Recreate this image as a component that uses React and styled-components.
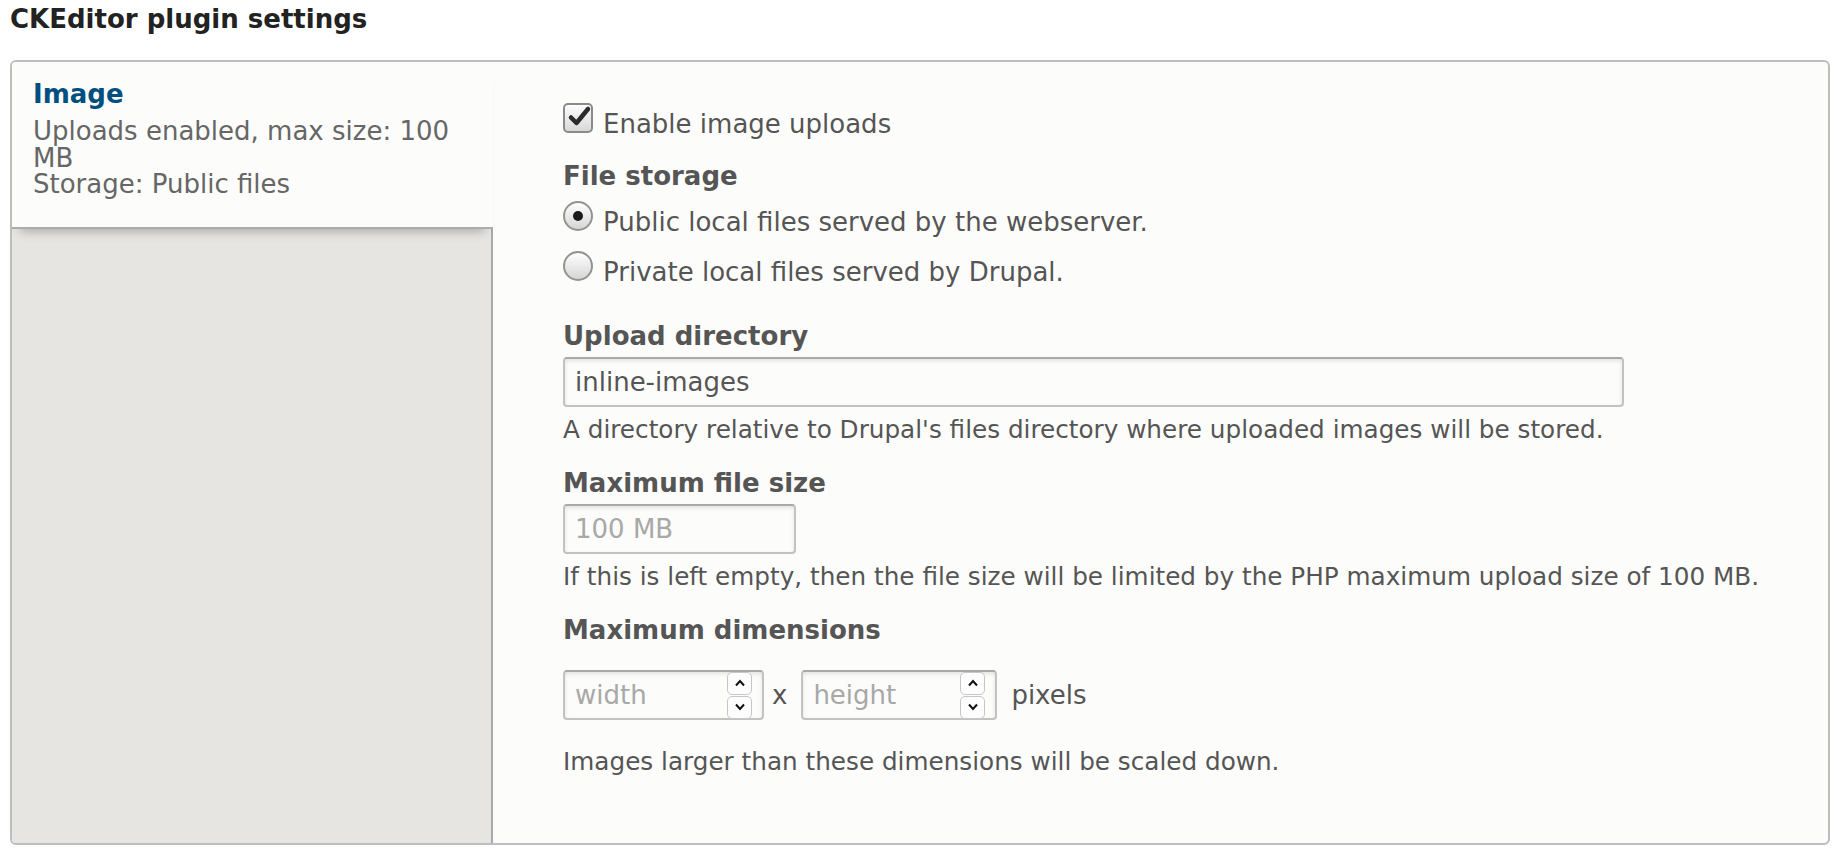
import React from 'react';
import styled, { createGlobalStyle } from 'styled-components';

const GlobalStyle = createGlobalStyle`
  html, body {
    margin: 0;
    padding: 0;
    background: #fff;
  }
  body {
    font-family: "DejaVu Sans", "Liberation Sans", sans-serif;
    font-size: 26px;
    color: #333;
  }
  * {
    box-sizing: border-box;
  }
`;

const Page = styled.div`
  padding: 4px 10px 0;
`;

const Heading = styled.h2`
  margin: 0 0 25px;
  font-size: 26px;
  line-height: 31px;
  font-weight: bold;
  color: #222;
`;

const Tabs = styled.div`
  display: grid;
  grid-template-columns: 481px 1fr;
  border: 2px solid #bdbdbd;
  border-radius: 6px;
  background: #fcfcfa;
  overflow: hidden;
`;

const Menu = styled.ul`
  margin: 0;
  padding: 0;
  list-style: none;
  display: flex;
  flex-direction: column;
  background: #e6e5e1;
  border-right: 2px solid #a9a9a9;
`;

const MenuItem = styled.li`
  position: relative;
  z-index: 1;
  margin-right: -2px;
  padding: 17px 20px 29px 21px;
  background: #fcfcfa;
  border-bottom: 2px solid #acacac;
  box-shadow: 0 10px 10px -8px rgba(0, 0, 0, 0.28);
`;

const TabTitle = styled.strong`
  display: block;
  font-size: 26px;
  line-height: 31px;
  color: #004f80;
`;

const TabSummary = styled.span`
  display: block;
  margin-top: 8px;
  font-size: 26px;
  line-height: 26.5px;
  color: #666;
`;

const Pane = styled.div`
  display: flex;
  flex-direction: column;
  align-items: flex-start;
  padding: 41px 40px 67px 70px;
  color: #555;
`;

const OptionRow = styled.label`
  display: flex;
  align-items: flex-start;
  gap: 10px;
  margin-top: ${p => p.$top || 0}px;
`;

const OptionText = styled.span`
  padding-top: 6px;
  font-size: 26px;
  line-height: 31px;
`;

const CheckBox = styled.span`
  position: relative;
  flex: none;
  width: 30px;
  height: 30px;
  border: 2px solid #8a8a8a;
  border-radius: 5px;
  background: linear-gradient(#fdfdfd, #d8d8d8);
  box-shadow: inset 0 1px 0 #fff;

  svg {
    position: absolute;
    left: 1px;
    top: -1px;
  }
`;

const Radio = styled.span`
  position: relative;
  flex: none;
  width: 30px;
  height: 30px;
  border: 2px solid #939393;
  border-radius: 50%;
  background: linear-gradient(#fefefe, #d6d6d6);

  &::after {
    content: '';
    display: ${p => (p.$checked ? 'block' : 'none')};
    position: absolute;
    left: 8px;
    top: 8px;
    width: 10px;
    height: 10px;
    border-radius: 50%;
    background: #1b1b1b;
  }
`;

const FieldLabel = styled.div`
  margin-top: ${p => p.$top}px;
  font-size: 26px;
  line-height: 31px;
  font-weight: bold;
`;

const TextInput = styled.input`
  display: block;
  width: ${p => p.$width}px;
  height: 50px;
  margin-top: 5px;
  padding: 0 10px;
  font-family: inherit;
  font-size: 26px;
  color: #555;
  background: #fcfcfa;
  border: 2px solid #c2c2c2;
  border-top-color: #a9a9a9;
  border-radius: 4px;
  box-shadow: inset 0 2px 4px rgba(0, 0, 0, 0.1);
  outline: none;

  &::placeholder {
    color: #a8a8a8;
  }
`;

const Description = styled.div`
  margin-top: ${p => p.$top}px;
  font-size: 24.7px;
  line-height: 29px;
  color: #555;
`;

const DimensionsRow = styled.div`
  display: flex;
  align-items: center;
  margin-top: 24px;
  font-size: 26px;
  line-height: 31px;
`;

const NumberField = styled.div`
  display: flex;
  align-items: center;
  width: ${p => p.$width}px;
  height: 50px;
  padding: 0 10px;
  background: #fcfcfa;
  border: 2px solid #c2c2c2;
  border-top-color: #a9a9a9;
  border-radius: 4px;
  box-shadow: inset 0 2px 4px rgba(0, 0, 0, 0.1);
`;

const Placeholder = styled.span`
  flex: 1;
  color: #a8a8a8;
`;

const Spinner = styled.span`
  display: flex;
  flex-direction: column;
  gap: 1px;
  width: 25px;
`;

const SpinButton = styled.span`
  display: flex;
  align-items: center;
  justify-content: center;
  height: 23px;
  border: 1.5px solid #c6c6c6;
  border-radius: 5px;
  background: #fdfdfd;
`;

const Times = styled.span`
  margin: 0 14px 0 8px;
`;

const Unit = styled.span`
  margin-left: 14px;
`;

const Chevron = ({ up }) => (
  <svg width="12" height="8" viewBox="0 0 12 8">
    <polyline
      points={up ? '2,6.5 6,2 10,6.5' : '2,1.5 6,6 10,1.5'}
      fill="none"
      stroke="#111"
      strokeWidth="2"
    />
  </svg>
);

const NumberInput = ({ placeholder, width }) => (
  <NumberField $width={width}>
    <Placeholder>{placeholder}</Placeholder>
    <Spinner>
      <SpinButton>
        <Chevron up />
      </SpinButton>
      <SpinButton>
        <Chevron />
      </SpinButton>
    </Spinner>
  </NumberField>
);

export default function App() {
  return (
    <Page>
      <GlobalStyle />
      <Heading>CKEditor plugin settings</Heading>
      <Tabs>
        <Menu>
          <MenuItem>
            <TabTitle>Image</TabTitle>
            <TabSummary>
              Uploads enabled, max size: 100 MB
              <br />
              Storage: Public files
            </TabSummary>
          </MenuItem>
        </Menu>
        <Pane>
          <OptionRow>
            <CheckBox>
              <svg width="26" height="26" viewBox="0 0 26 26">
                <path
                  d="M5 13.5 L10.5 19 L22 5"
                  fill="none"
                  stroke="#2b2b2b"
                  strokeWidth="4.5"
                  strokeLinecap="round"
                  strokeLinejoin="round"
                />
              </svg>
            </CheckBox>
            <OptionText>Enable image uploads</OptionText>
          </OptionRow>

          <FieldLabel $top={21}>File storage</FieldLabel>
          <OptionRow $top={9}>
            <Radio $checked />
            <OptionText>Public local files served by the webserver.</OptionText>
          </OptionRow>
          <OptionRow $top={13}>
            <Radio />
            <OptionText>Private local files served by Drupal.</OptionText>
          </OptionRow>

          <FieldLabel $top={33}>Upload directory</FieldLabel>
          <TextInput $width={1061} defaultValue="inline-images" />
          <Description $top={8}>
            A directory relative to Drupal's files directory where uploaded images will be stored.
          </Description>

          <FieldLabel $top={24}>Maximum file size</FieldLabel>
          <TextInput $width={233} placeholder="100 MB" />
          <Description $top={8}>
            If this is left empty, then the file size will be limited by the PHP maximum upload size of 100 MB.
          </Description>

          <FieldLabel $top={24}>Maximum dimensions</FieldLabel>
          <DimensionsRow>
            <NumberInput placeholder="width" width={201} />
            <Times>x</Times>
            <NumberInput placeholder="height" width={196} />
            <Unit>pixels</Unit>
          </DimensionsRow>
          <Description $top={27}>
            Images larger than these dimensions will be scaled down.
          </Description>
        </Pane>
      </Tabs>
    </Page>
  );
}
